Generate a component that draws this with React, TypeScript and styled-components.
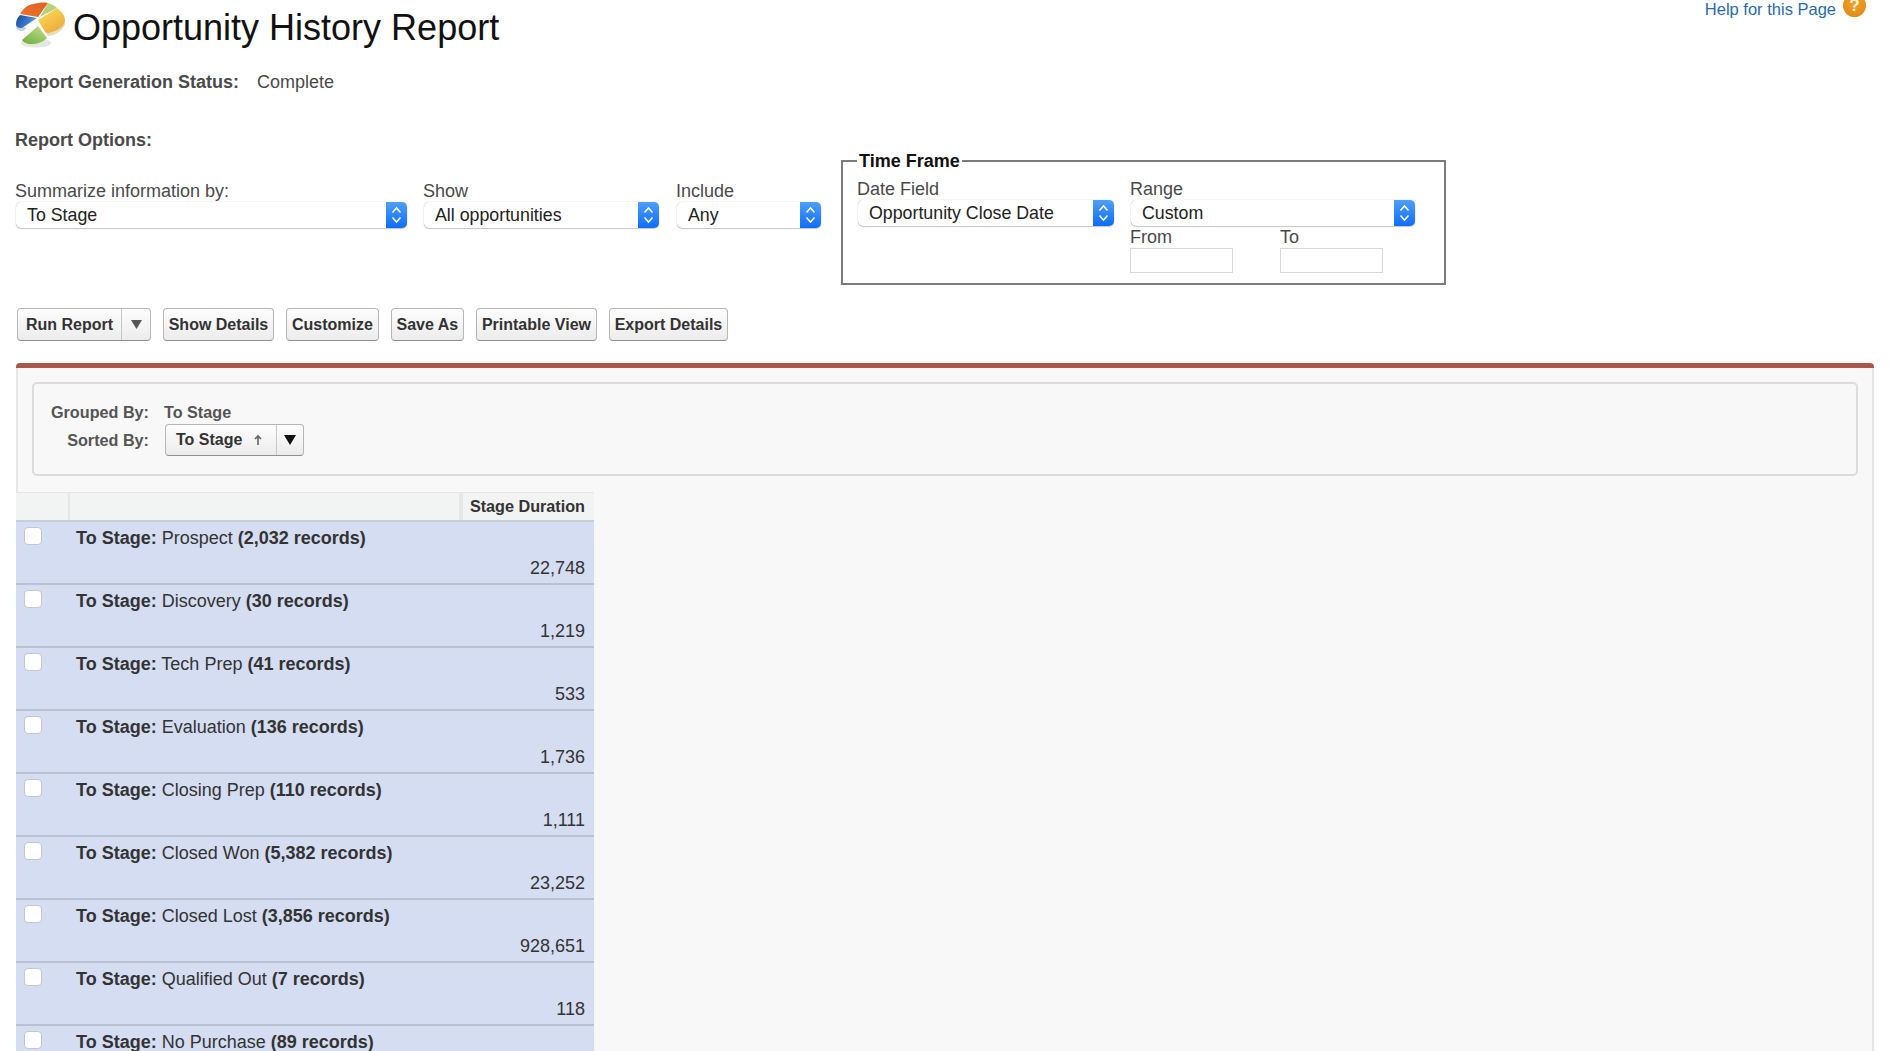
import React from 'react'
import styled, { createGlobalStyle } from 'styled-components'

const GlobalStyle = createGlobalStyle`
  html, body {
    margin: 0;
    padding: 0;
    background: #fff;
  }
  body {
    font-family: "Liberation Sans", Arial, sans-serif;
    color: #4a4a4a;
  }
`

const Page = styled.div`
  height: 1051px;
  overflow: hidden;
  background: #fff;
`

const Header = styled.header`
  display: flex;
  align-items: flex-start;
  height: 52px;
  padding: 2px 24px 0 15px;
  box-sizing: border-box;
`

const Title = styled.h1`
  margin: 5px 0 0 8px;
  font-size: 36px;
  line-height: 42px;
  font-weight: 400;
  color: #111;
  flex: 1;
`

const HelpLink = styled.a`
  display: flex;
  align-items: flex-start;
  gap: 7px;
  margin-top: -2px;
  color: #2a6ab0;
  font-size: 16.5px;
  line-height: 19px;
`

const HelpIcon = styled.span`
  width: 23px;
  height: 23px;
  margin-top: -6px;
  border-radius: 50%;
  background: radial-gradient(circle at 50% 40%, #f2a22c, #dd8410);
  color: #fff2d8;
  font-size: 17px;
  font-weight: 700;
  line-height: 23px;
  text-align: center;
`

const StatusRow = styled.div`
  display: flex;
  height: 30px;
  margin: 15px 0 0 15px;
  font-size: 18px;
  line-height: 30px;
  gap: 18px;
`

const Strong = styled.span`
  font-weight: 700;
`

const OptionsTitle = styled.div`
  height: 30px;
  margin: 28px 0 0 15px;
  font-size: 18px;
  font-weight: 700;
  line-height: 30px;
`

const OptionsRow = styled.div`
  display: flex;
  align-items: flex-start;
  height: 153px;
  padding-left: 15px;
  box-sizing: border-box;
`

const Filter = styled.div<{ $width: number; $gap?: number }>`
  width: ${p => p.$width}px;
  margin-right: ${p => p.$gap ?? 0}px;
  padding-top: 26px;
`

const FieldLabel = styled.div`
  height: 21px;
  font-size: 18px;
  line-height: 21px;
  color: #4a4a4a;
`

const SelectBox = styled.div`
  display: flex;
  align-items: center;
  justify-content: space-between;
  height: 26px;
  margin-left: 1px;
  padding-left: 11px;
  box-sizing: border-box;
  background: #fff;
  border-radius: 5px;
  box-shadow: 0 0 1px rgba(0, 0, 0, 0.35), 0 1px 1px rgba(0, 0, 0, 0.2);
  color: #222;
  font-size: 17.8px;
  line-height: 28px;
`

const SelectArrows = styled.span`
  display: flex;
  align-items: center;
  justify-content: center;
  width: 21px;
  height: 26px;
  border-radius: 0 5px 5px 0;
  background: linear-gradient(#4f9ffa, #0f6df5);
`

const TimeFrame = styled.fieldset`
  display: flex;
  width: 605px;
  height: 134.5px;
  min-width: 0;
  margin: -4.5px 0 0;
  padding: 0 0 0 14px;
  box-sizing: border-box;
  border: 2px solid #7c7c7c;
`

const TimeLegend = styled.legend`
  padding: 0 2px;
  font-size: 18px;
  font-weight: 700;
  line-height: 20px;
  color: #111;
`

const DateColumn = styled.div`
  width: 257px;
  margin-right: 16px;
  padding-top: 8.5px;
`

const RangeColumn = styled.div`
  width: 285px;
  padding-top: 8.5px;
`

const RangeDates = styled.div`
  display: flex;
  gap: 47px;
  margin-top: 1px;
`

const DateBox = styled.div`
  width: 103px;
`

const DateInput = styled.input`
  display: block;
  width: 103px;
  height: 25px;
  padding: 0;
  box-sizing: border-box;
  border: 1px solid #d9d9d9;
  border-radius: 0;
  background: #fff;
  outline: none;
`

const Toolbar = styled.div`
  display: flex;
  gap: 11.7px;
  height: 33px;
  padding-left: 17px;
`

const Button = styled.button`
  height: 33px;
  padding: 0 5px;
  border: 1px solid #b6b6b6;
  border-bottom-color: #8f8f8f;
  border-radius: 4px;
  background: linear-gradient(#fdfdfd, #ececec);
  color: #333;
  font-family: inherit;
  font-size: 16px;
  font-weight: 700;
`

const SplitButton = styled.div`
  display: flex;
  height: 33px;
  box-sizing: border-box;
  border: 1px solid #b6b6b6;
  border-bottom-color: #8f8f8f;
  border-radius: 4px;
  background: linear-gradient(#fdfdfd, #ececec);
  color: #333;
  font-size: 16px;
  font-weight: 700;
  line-height: 31px;
`

const SplitLabel = styled.span<{ $width: number; $padding: number }>`
  display: flex;
  align-items: center;
  flex: none;
  width: ${p => p.$width}px;
  padding-left: ${p => p.$padding}px;
  box-sizing: border-box;
  border-right: 1px solid #c8c8c8;
`

const SplitCaret = styled.span<{ $width: number }>`
  display: flex;
  align-items: center;
  justify-content: center;
  flex: none;
  width: ${p => p.$width}px;
`

const Panel = styled.section`
  width: 1858px;
  height: 688px;
  margin: 22px 0 0 16px;
  background: #f8f8f8;
  border-top: 5px solid #a9574a;
  border-radius: 4px 4px 0 0;
  box-shadow: inset 2px 0 0 #e6e6e6, inset -2px 0 0 #e6e6e6;
  overflow: hidden;
`

const GroupBox = styled.div`
  display: grid;
  grid-template-columns: 114px 1fr;
  grid-template-rows: 24px 32px;
  column-gap: 15px;
  align-items: center;
  align-content: start;
  width: 1826px;
  height: 94px;
  margin: 14px 0 16px 16px;
  padding: 16px 0 0 1px;
  box-sizing: border-box;
  border: 2px solid #dcdcdc;
  border-radius: 5px;
  font-size: 16.2px;
  font-weight: 700;
  color: #555;
`

const GroupLabel = styled.span`
  text-align: right;
`

const SortButton = styled(SplitButton)`
  width: 139px;
  height: 32px;
  margin-left: 1px;
  line-height: 30px;
`

const SortArrow = styled.svg`
  margin-left: 11px;
`

const Table = styled.div`
  width: 578px;
  color: #333;
  font-size: 18px;
`

const HeaderRow = styled.div`
  display: grid;
  grid-template-columns: 54px 391px 1fr;
  height: 30px;
  box-sizing: border-box;
  background: #f2f3f3;
  border-top: 1px solid #e7e7e7;
  border-bottom: 2px solid #c9ced6;
`

const HeaderCell = styled.div<{ $last?: boolean }>`
  padding-right: 9px;
  border-left: ${p => (p.$last ? '2px solid #e7e7e7' : 'none')};
  box-shadow: ${p => (p.$last ? 'none' : 'inset -2px 0 0 #e7e7e7')};
  font-size: 16.2px;
  font-weight: 700;
  line-height: 27px;
  text-align: right;
`

const Row = styled.div`
  display: grid;
  grid-template-columns: 60px 1fr;
  height: 63.05px;
  box-sizing: border-box;
  background: #d5ddf2;
  border-bottom: 2px solid #b9c1d3;
`

const Check = styled.input`
  appearance: none;
  width: 18px;
  height: 18px;
  margin: 5px 0 0 8px;
  border: 1px solid #c4c6cc;
  border-radius: 4px;
  background: #fff;
`

const RowBody = styled.div`
  padding: 3.5px 9px 0 0;
`

const RowTitle = styled.div`
  height: 24px;
  line-height: 24px;
`

const RowValue = styled.div`
  margin-top: 6px;
  line-height: 24px;
  text-align: right;
`

function UpDown() {
  return (
    <svg width="11" height="20" viewBox="0 0 11 20" fill="none" stroke="#fff" strokeWidth="1.5">
      <path d="M1.5 7.5 5.5 3l4 4.5M1.5 12.5 5.5 17l4-4.5" />
    </svg>
  )
}

function Caret({ color = '#444', size = 11 }: { color?: string; size?: number }) {
  return (
    <svg width={size} height={size - 2} viewBox="0 0 11 9">
      <path d="M0 0h11L5.5 9z" fill={color} />
    </svg>
  )
}

function Logo() {
  return (
    <svg width="50" height="48" viewBox="0 0 50 48">
      <defs>
        <linearGradient id="orange" x1="0" y1="1" x2="1" y2="0">
          <stop offset="0" stopColor="#e9742e" />
          <stop offset="1" stopColor="#e55f22" />
        </linearGradient>
        <linearGradient id="yellow" x1="0.2" y1="0" x2="0.8" y2="1">
          <stop offset="0" stopColor="#f7df58" />
          <stop offset="1" stopColor="#eda53a" />
        </linearGradient>
        <linearGradient id="blue" x1="0" y1="0.3" x2="1" y2="0.7">
          <stop offset="0" stopColor="#1f4f9e" />
          <stop offset="0.6" stopColor="#3a7fd0" />
          <stop offset="1" stopColor="#7fb2e4" />
        </linearGradient>
        <linearGradient id="green" x1="0.2" y1="1" x2="0.8" y2="0">
          <stop offset="0" stopColor="#74b23e" />
          <stop offset="1" stopColor="#bfdc8c" />
        </linearGradient>
      </defs>
      <ellipse cx="21" cy="41" rx="15" ry="4.5" fill="#e4e6e1" />
      <path d="M1 22 C0 26 3 30 8 29 L12 26z" fill="#c5d2de" />
      <path d="M50 18 C52 24 44 33 33 34 L30 30z" fill="#e9dcb8" />
      <path d="M5 12 C8 7 12 3 18 2 C23 1 28 0 33 1 L23 15z" fill="url(#orange)" />
      <path d="M33 1 C37 2 40 4 42 6 L25 15z" fill="#b6d27c" />
      <path d="M23 18 L42 6 C47 10 50 14 50 18 C50 23 44 29 33 31 L30 30z" fill="url(#yellow)" />
      <path d="M1 22 C1 18 3 15 5 13 L22 16 L7 26 C3 26 1 25 1 22z" fill="url(#blue)" />
      <path d="M7 38 L23 24 L32 36 C28 40 22 42 16 42 C12 42 8 40 7 38z" fill="url(#green)" />
    </svg>
  )
}

const stages = [
  { name: 'Prospect', count: '2,032', total: '22,748' },
  { name: 'Discovery', count: '30', total: '1,219' },
  { name: 'Tech Prep', count: '41', total: '533' },
  { name: 'Evaluation', count: '136', total: '1,736' },
  { name: 'Closing Prep', count: '110', total: '1,111' },
  { name: 'Closed Won', count: '5,382', total: '23,252' },
  { name: 'Closed Lost', count: '3,856', total: '928,651' },
  { name: 'Qualified Out', count: '7', total: '118' },
  { name: 'No Purchase', count: '89', total: '' }
]

function Select({ value }: { value: string }) {
  return (
    <SelectBox>
      {value}
      <SelectArrows>
        <UpDown />
      </SelectArrows>
    </SelectBox>
  )
}

function App() {
  return (
    <Page>
      <GlobalStyle />
      <Header>
        <Logo />
        <Title>Opportunity History Report</Title>
        <HelpLink>
          Help for this Page
          <HelpIcon>?</HelpIcon>
        </HelpLink>
      </Header>

      <StatusRow>
        <Strong>Report Generation Status:</Strong>
        <span>Complete</span>
      </StatusRow>

      <OptionsTitle>Report Options:</OptionsTitle>

      <OptionsRow>
        <Filter $width={392} $gap={16}>
          <FieldLabel>Summarize information by:</FieldLabel>
          <Select value="To Stage" />
        </Filter>
        <Filter $width={236} $gap={17}>
          <FieldLabel>Show</FieldLabel>
          <Select value="All opportunities" />
        </Filter>
        <Filter $width={145} $gap={20}>
          <FieldLabel>Include</FieldLabel>
          <Select value="Any" />
        </Filter>
        <TimeFrame>
          <TimeLegend>Time Frame</TimeLegend>
          <DateColumn>
            <FieldLabel>Date Field</FieldLabel>
            <Select value="Opportunity Close Date" />
          </DateColumn>
          <RangeColumn>
            <FieldLabel>Range</FieldLabel>
            <Select value="Custom" />
            <RangeDates>
              <DateBox>
                <FieldLabel>From</FieldLabel>
                <DateInput />
              </DateBox>
              <DateBox>
                <FieldLabel>To</FieldLabel>
                <DateInput />
              </DateBox>
            </RangeDates>
          </RangeColumn>
        </TimeFrame>
      </OptionsRow>

      <Toolbar>
        <SplitButton>
          <SplitLabel $width={104} $padding={8}>Run Report</SplitLabel>
          <SplitCaret $width={28}>
            <Caret color="#555" />
          </SplitCaret>
        </SplitButton>
        <Button>Show Details</Button>
        <Button>Customize</Button>
        <Button>Save As</Button>
        <Button>Printable View</Button>
        <Button>Export Details</Button>
      </Toolbar>

      <Panel>
        <GroupBox>
          <GroupLabel>Grouped By:</GroupLabel>
          <span>To Stage</span>
          <GroupLabel>Sorted By:</GroupLabel>
          <SortButton>
            <SplitLabel $width={111} $padding={10}>
              To Stage
              <SortArrow width="10" height="12" viewBox="0 0 10 12" fill="none" stroke="#666" strokeWidth="1.6">
                <path d="M5 11V2M2 5l3-3 3 3" />
              </SortArrow>
            </SplitLabel>
            <SplitCaret $width={26}>
              <Caret color="#111" size={12} />
            </SplitCaret>
          </SortButton>
        </GroupBox>

        <Table>
          <HeaderRow>
            <HeaderCell />
            <HeaderCell />
            <HeaderCell $last>Stage Duration</HeaderCell>
          </HeaderRow>
          {stages.map(stage => (
            <Row key={stage.name}>
              <Check type="checkbox" />
              <RowBody>
                <RowTitle>
                  <Strong>To Stage:</Strong> {stage.name} <Strong>({stage.count} records)</Strong>
                </RowTitle>
                <RowValue>{stage.total}</RowValue>
              </RowBody>
            </Row>
          ))}
        </Table>
      </Panel>
    </Page>
  )
}

export default App
